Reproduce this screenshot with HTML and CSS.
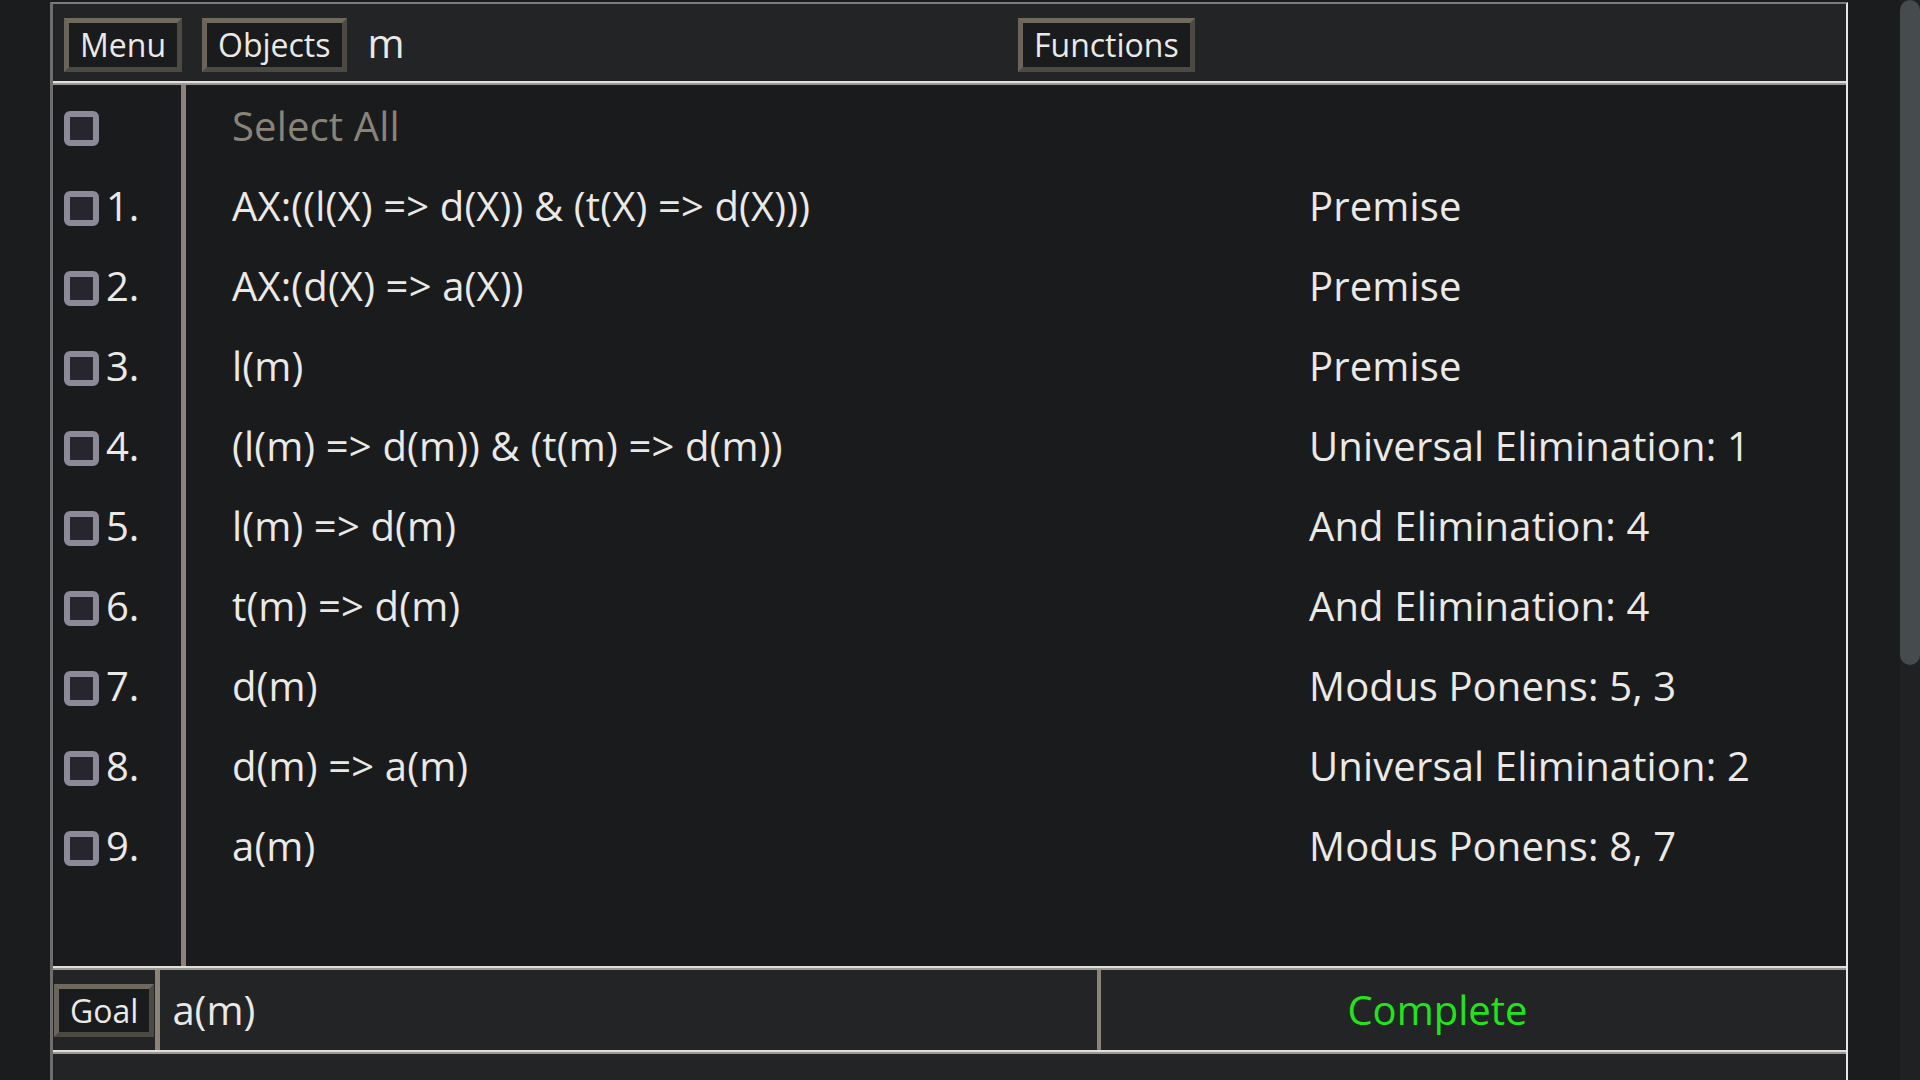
FILE: index.html
```html
<!DOCTYPE html>
<html>
<head>
<meta charset="utf-8">
<link rel="stylesheet" href="styles.css">
</head>
<body>
<div class="screen">
  <div class="panel">
    <header class="toolbar">
      <div class="toolbar-left">
        <button class="btn">Menu</button>
        <button class="btn">Objects</button>
        <span class="var">m</span>
      </div>
      <button class="btn">Functions</button>
    </header>
    <section class="proof">
      <div class="gutter">
        <div class="g-row"><span class="check"></span></div>
        <div class="g-row"><span class="check"></span><span class="num">1.</span></div>
        <div class="g-row"><span class="check"></span><span class="num">2.</span></div>
        <div class="g-row"><span class="check"></span><span class="num">3.</span></div>
        <div class="g-row"><span class="check"></span><span class="num">4.</span></div>
        <div class="g-row"><span class="check"></span><span class="num">5.</span></div>
        <div class="g-row"><span class="check"></span><span class="num">6.</span></div>
        <div class="g-row"><span class="check"></span><span class="num">7.</span></div>
        <div class="g-row"><span class="check"></span><span class="num">8.</span></div>
        <div class="g-row"><span class="check"></span><span class="num">9.</span></div>
      </div>
      <div class="lines">
        <div class="p-row"><span class="select-all">Select All</span><span></span></div>
        <div class="p-row"><span>AX:((l(X) =&gt; d(X)) &amp; (t(X) =&gt; d(X)))</span><span>Premise</span></div>
        <div class="p-row"><span>AX:(d(X) =&gt; a(X))</span><span>Premise</span></div>
        <div class="p-row"><span>l(m)</span><span>Premise</span></div>
        <div class="p-row"><span>(l(m) =&gt; d(m)) &amp; (t(m) =&gt; d(m))</span><span>Universal Elimination: 1</span></div>
        <div class="p-row"><span>l(m) =&gt; d(m)</span><span>And Elimination: 4</span></div>
        <div class="p-row"><span>t(m) =&gt; d(m)</span><span>And Elimination: 4</span></div>
        <div class="p-row"><span>d(m)</span><span>Modus Ponens: 5, 3</span></div>
        <div class="p-row"><span>d(m) =&gt; a(m)</span><span>Universal Elimination: 2</span></div>
        <div class="p-row"><span>a(m)</span><span>Modus Ponens: 8, 7</span></div>
      </div>
    </section>
    <footer class="goalbar">
      <button class="btn btn-goal">Goal</button>
      <div class="goal-text">a(m)</div>
      <div class="status">Complete</div>
    </footer>
    <div class="below"></div>
  </div>
  <div class="track"><div class="thumb"></div></div>
</div>
</body>
</html>
```

FILE: styles.css
```css
html, body {
  margin: 0;
  padding: 0;
  height: 100%;
  overflow: hidden;
  background: #1b1c1e;
}
body {
  font-family: "Open Sans", "Noto Sans", sans-serif;
  color: #ebe9e6;
}
.screen {
  display: flex;
  height: 1080px;
  padding-left: 50px;
}
.panel {
  width: 1793px;
  margin-top: 2px;
  border-top: 2px solid #7c7c7c;
  border-left: 3px solid #6e6e6e;
  border-right: 2px solid #e6e6e6;
  display: flex;
  flex-direction: column;
}
.track {
  margin-left: 52px;
  width: 20px;
  background: #1f2122;
}
.thumb {
  height: 665px;
  background: #464b4e;
  border-radius: 10px;
}

/* Toolbar */
.toolbar {
  height: 79px;
  background: #232426;
  border-bottom: 2px solid #e2dfda;
  display: flex;
  align-items: flex-start;
  padding: 14px 0 0 11px;
  box-sizing: border-box;
}
.toolbar-left {
  width: 954px;
  display: flex;
  align-items: flex-start;
  gap: 20px;
}
.btn {
  font-family: "Open Sans", "Noto Sans", sans-serif;
  font-size: 32px;
  line-height: 44px;
  height: 54px;
  padding: 0 11px;
  margin: 0;
  color: #ebe9e6;
  background: #1a1b1d;
  border: 5px solid;
  border-color: #6f695e #4d4943 #4d4943 #6a645a;
  box-sizing: border-box;
}
.var {
  font-size: 40px;
  line-height: 50px;
  margin-left: 1px;
}

/* Proof list */
.proof {
  height: 881px;
  background: #1a1b1d;
  border-top: 2px solid #9a9893;
  border-bottom: 2px solid #e2dfda;
  display: flex;
}
.gutter {
  width: 128px;
  padding-top: 3px;
}
.g-row {
  height: 80px;
  display: flex;
  align-items: flex-start;
  padding-left: 11px;
  gap: 7px;
}
.check {
  width: 35px;
  height: 35px;
  margin-top: 23px;
  box-sizing: border-box;
  border: 6px solid #8c8a99;
  border-radius: 6px;
  background: #27262e;
  flex: none;
}
.num, .p-row span {
  font-size: 40px;
  line-height: 75px;
}
.p-row span {
  letter-spacing: 0.15px;
}
.lines {
  flex: 1;
  border-left: 5px solid #8b8378;
  padding: 3px 0 0 46px;
}
.p-row {
  height: 80px;
  display: grid;
  grid-template-columns: 1077px 1fr;
  white-space: nowrap;
}
.p-row span.select-all {
  color: #8a8478;
}

/* Goal bar */
.goalbar {
  height: 80px;
  background: #232426;
  border-top: 2px solid #9a9893;
  border-bottom: 2px solid #e2dfda;
  display: flex;
  align-items: stretch;
}
.btn-goal {
  align-self: center;
  margin: 1px 0 0 1px;
  height: 53px;
  line-height: 43px;
}
.goal-text {
  border-left: 5px solid #8b8378;
  margin-left: 1px;
  width: 942px;
  padding-left: 12px;
  font-size: 40px;
  line-height: 80px;
  box-sizing: border-box;
}
.status {
  border-left: 4px solid #8b8378;
  padding-left: 246px;
  font-size: 40px;
  line-height: 80px;
  color: #22e41c;
}
.below {
  flex: 1;
  background: #232426;
  border-top: 2px solid #9a9893;
}
```
